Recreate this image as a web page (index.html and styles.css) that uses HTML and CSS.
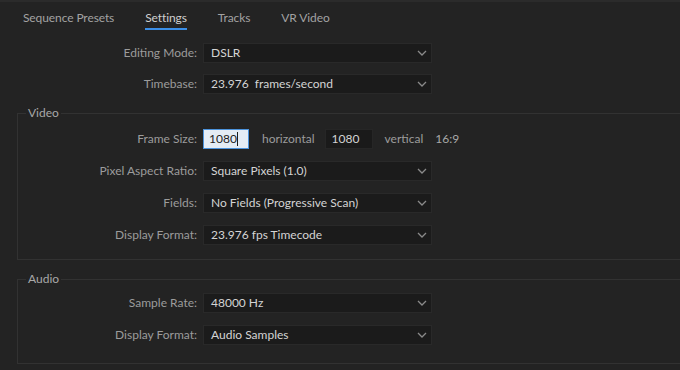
FILE: index.html
```html
<!DOCTYPE html>
<html lang="en">
<head>
    <meta charset="UTF-8">
    <title>New Sequence - Settings</title>
    <link rel="stylesheet" href="styles.css">
</head>
<body>
    <div class="dialog">
        <nav class="tabs">
            <span class="tab">Sequence Presets</span>
            <span class="tab active">Settings</span>
            <span class="tab">Tracks</span>
            <span class="tab">VR Video</span>
        </nav>

        <div class="general">
            <div class="row">
                <span class="label">Editing Mode:</span>
                <div class="select">
                    <span class="value">DSLR</span>
                    <svg class="chevron" width="10" height="6" viewBox="0 0 10 6"><path d="M1 1 L5 5 L9 1" /></svg>
                </div>
            </div>
            <div class="row">
                <span class="label">Timebase:</span>
                <div class="select">
                    <span class="value">23.976&nbsp; frames/second</span>
                    <svg class="chevron" width="10" height="6" viewBox="0 0 10 6"><path d="M1 1 L5 5 L9 1" /></svg>
                </div>
            </div>
        </div>

        <div class="sections">
            <fieldset class="group video">
                <legend>Video</legend>
                <div class="row">
                    <span class="label">Frame Size:</span>
                    <div class="frame-size">
                        <div class="num focused">1080<span class="caret"></span></div>
                        <span class="unit horiz">horizontal</span>
                        <div class="num">1080</div>
                        <span class="unit vert">vertical</span>
                        <span class="ratio">16:9</span>
                    </div>
                </div>
                <div class="row">
                    <span class="label">Pixel Aspect Ratio:</span>
                    <div class="select">
                        <span class="value">Square Pixels (1.0)</span>
                        <svg class="chevron" width="10" height="6" viewBox="0 0 10 6"><path d="M1 1 L5 5 L9 1" /></svg>
                    </div>
                </div>
                <div class="row">
                    <span class="label">Fields:</span>
                    <div class="select">
                        <span class="value">No Fields (Progressive Scan)</span>
                        <svg class="chevron" width="10" height="6" viewBox="0 0 10 6"><path d="M1 1 L5 5 L9 1" /></svg>
                    </div>
                </div>
                <div class="row">
                    <span class="label">Display Format:</span>
                    <div class="select">
                        <span class="value">23.976 fps Timecode</span>
                        <svg class="chevron" width="10" height="6" viewBox="0 0 10 6"><path d="M1 1 L5 5 L9 1" /></svg>
                    </div>
                </div>
            </fieldset>

            <fieldset class="group audio">
                <legend>Audio</legend>
                <div class="row">
                    <span class="label">Sample Rate:</span>
                    <div class="select">
                        <span class="value">48000 Hz</span>
                        <svg class="chevron" width="10" height="6" viewBox="0 0 10 6"><path d="M1 1 L5 5 L9 1" /></svg>
                    </div>
                </div>
                <div class="row">
                    <span class="label">Display Format:</span>
                    <div class="select">
                        <span class="value">Audio Samples</span>
                        <svg class="chevron" width="10" height="6" viewBox="0 0 10 6"><path d="M1 1 L5 5 L9 1" /></svg>
                    </div>
                </div>
            </fieldset>
        </div>
    </div>
</body>
</html>
```

FILE: styles.css
```css
* {
    margin: 0;
    padding: 0;
    box-sizing: border-box;
}

body {
    font-family: Lato, 'Open Sans', sans-serif;
    font-size: 12px;
    line-height: 16px;
    background: #232323;
    color: #9c9c9c;
    border-top: 2px solid #2b2b2b;
    height: 370px;
    overflow: hidden;
}

.tabs {
    display: flex;
    gap: 31px;
    padding-left: 23px;
    height: 28px;
}

.tab {
    padding-top: 8px;
    height: 28px;
    color: #a2a2a2;
    letter-spacing: -0.1px;
}

.tab.active {
    color: #cfcfcf;
    border-bottom: 2px solid #3b8ee6;
}

.general {
    margin-top: 13px;
    --label-w: 197px;
}

.row {
    display: flex;
    align-items: center;
    height: 20px;
    margin-bottom: 11px;
}

.label {
    width: var(--label-w);
    text-align: right;
    margin-right: 6px;
    flex-shrink: 0;
}

.select {
    width: 229px;
    height: 20px;
    background: #1b1b1b;
    border: 1px solid #292929;
    display: flex;
    align-items: center;
    justify-content: space-between;
    padding: 0 4px 0 7px;
}

.value {
    color: #d4d4d4;
}

.chevron path {
    fill: none;
    stroke: #8a8a8a;
    stroke-width: 1.3;
}

.group {
    margin-left: 17px;
    border: 1px solid #323232;
    border-right: none;
    --label-w: 179px;
}

.group legend {
    margin-left: 8px;
    padding: 0 2px;
    color: #a8a8a8;
    line-height: 16px;
}

.group .row {
    margin-bottom: 12px;
}

.video {
    padding: 8px 0 2px;
}

.audio {
    margin-top: 11px;
    padding: 6px 0 6px;
}

.frame-size {
    display: flex;
    align-items: center;
}

.num {
    height: 20px;
    padding: 0 6px;
    line-height: 18px;
    background: #1a1a1a;
    border: 1px solid #262626;
    color: #d4d4d4;
    width: 48px;
}

.num.focused {
    width: 46px;
    background: #e4ecf5;
    border: 1px solid #4c93dc;
    color: #1e1e1e;
    padding-left: 5px;
}

.caret {
    display: inline-block;
    width: 1px;
    height: 14px;
    background: #1e1e1e;
    vertical-align: -3px;
}

.unit.horiz {
    margin: 0 10px 0 13px;
}

.unit.vert {
    margin: 0 12px 0 12px;
}

.ratio {
    color: #a8a8a8;
}
```
